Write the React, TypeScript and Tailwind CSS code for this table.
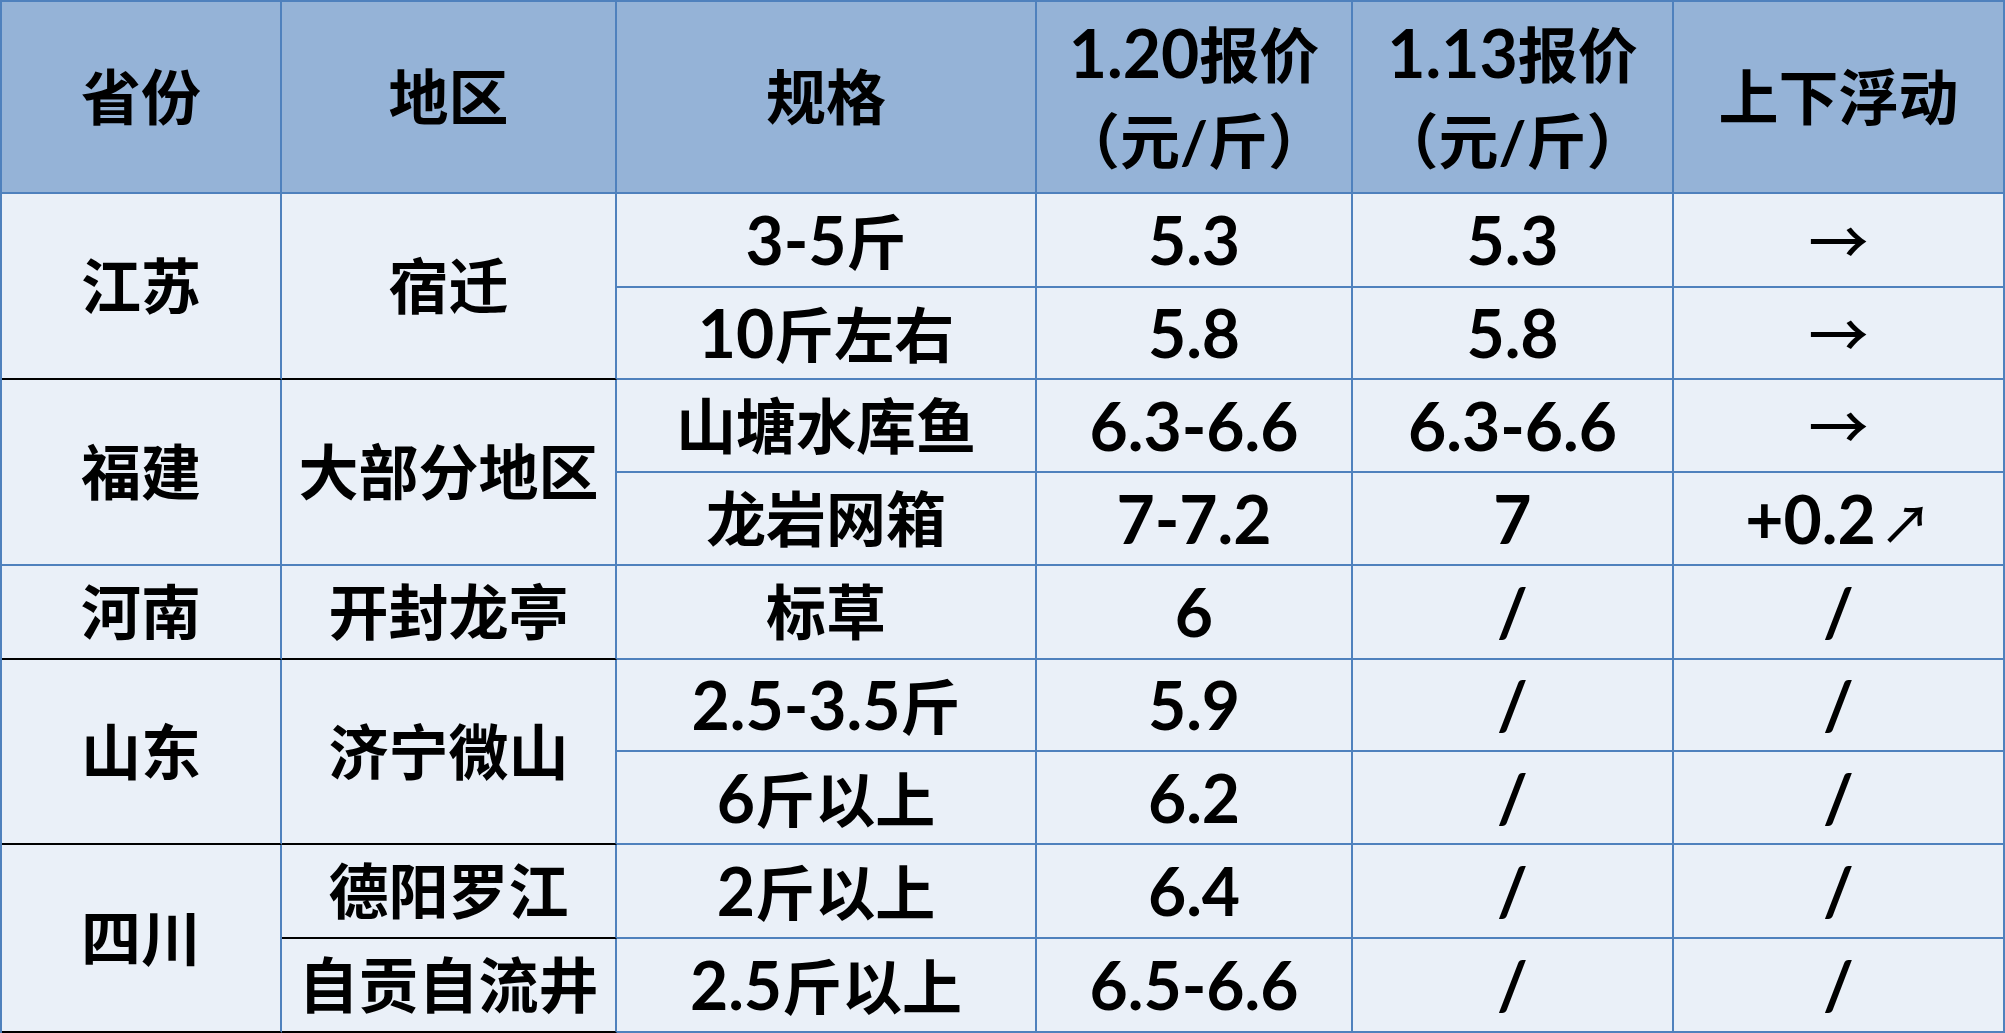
import React from 'react';

// latin runs get a bigger size so digits match the Calibri-like look
function Mixed({ s }: { s: string }) {
  const parts = s.match(/[\x20-\x7e]+|[^\x20-\x7e]+/g) || [];
  return (
    <>
      {parts.map((p, i) =>
        /^[\x20-\x7e]+$/.test(p) ? (
          <span key={i} className="text-[66px]">
            {p}
          </span>
        ) : (
          <span key={i}>{p}</span>
        )
      )}
    </>
  );
}

type Cell = {
  text: React.ReactNode;
  span?: number;
  black?: boolean;
};

function C({ text, span, black }: Cell) {
  return (
    <div
      className={`flex items-center justify-center border-r-2 border-b-2 border-r-[#4F81BD] ${
        black ? 'border-b-black' : 'border-b-[#4F81BD]'
      } ${span === 2 ? 'row-span-2' : ''}`}
    >
      <span className="whitespace-nowrap leading-none">
        {typeof text === 'string' ? <Mixed s={text} /> : text}
      </span>
    </div>
  );
}

const Arrow = () => <span className="font-['Noto_Sans_CJK_SC'] font-medium text-[60px]">→</span>;
const UpArrow = () => (
  <span className="ml-1 font-['Noto_Sans_CJK_SC'] font-medium text-[52px]">↗</span>
);

const head = 'flex items-center justify-center bg-[#95B3D7] border-r-2 border-b-2 border-[#4F81BD]';

export default function App() {
  return (
    <div className="w-[2005px] h-[1033px] overflow-hidden bg-[#EAF0F8] font-['Lato','Noto_Sans_CJK_SC',sans-serif] font-bold text-black text-[60px]">
      <div className="grid grid-cols-[280px_335px_420px_316px_321px_331px] grid-rows-[192px_94px_92px_93px_93px_94px_92px_93px_94px_94px] border-l-2 border-t-2 border-[#4F81BD]">
        {/* header */}
        <div className={head}>省份</div>
        <div className={head}>地区</div>
        <div className={head}>规格</div>
        <div className={`${head} flex-col leading-[86px]`}>
          <span><Mixed s="1.20" />报价</span>
          <span>（元/斤）</span>
        </div>
        <div className={`${head} flex-col leading-[86px]`}>
          <span><Mixed s="1.13" />报价</span>
          <span>（元/斤）</span>
        </div>
        <div className={head}>上下浮动</div>

        {/* 江苏 */}
        <C text="江苏" span={2} black />
        <C text="宿迁" span={2} black />
        <C text="3-5斤" />
        <C text="5.3" />
        <C text="5.3" />
        <C text={<Arrow />} />
        <C text="10斤左右" />
        <C text="5.8" />
        <C text="5.8" />
        <C text={<Arrow />} />

        {/* 福建 */}
        <C text="福建" span={2} />
        <C text="大部分地区" span={2} />
        <C text="山塘水库鱼" />
        <C text="6.3-6.6" />
        <C text="6.3-6.6" />
        <C text={<Arrow />} />
        <C text="龙岩网箱" />
        <C text="7-7.2" />
        <C text="7" />
        <C text={<><Mixed s="+0.2" /><UpArrow /></>} />

        {/* 河南 */}
        <C text="河南" black />
        <C text="开封龙亭" black />
        <C text="标草" />
        <C text="6" />
        <C text="/" />
        <C text="/" />

        {/* 山东 */}
        <C text="山东" span={2} black />
        <C text="济宁微山" span={2} black />
        <C text="2.5-3.5斤" />
        <C text="5.9" />
        <C text="/" />
        <C text="/" />
        <C text="6斤以上" />
        <C text="6.2" />
        <C text="/" />
        <C text="/" />

        {/* 四川 */}
        <C text="四川" span={2} black />
        <C text="德阳罗江" black />
        <C text="2斤以上" />
        <C text="6.4" />
        <C text="/" />
        <C text="/" />
        <C text="自贡自流井" black />
        <C text="2.5斤以上" />
        <C text="6.5-6.6" />
        <C text="/" />
        <C text="/" />
      </div>
    </div>
  );
}
